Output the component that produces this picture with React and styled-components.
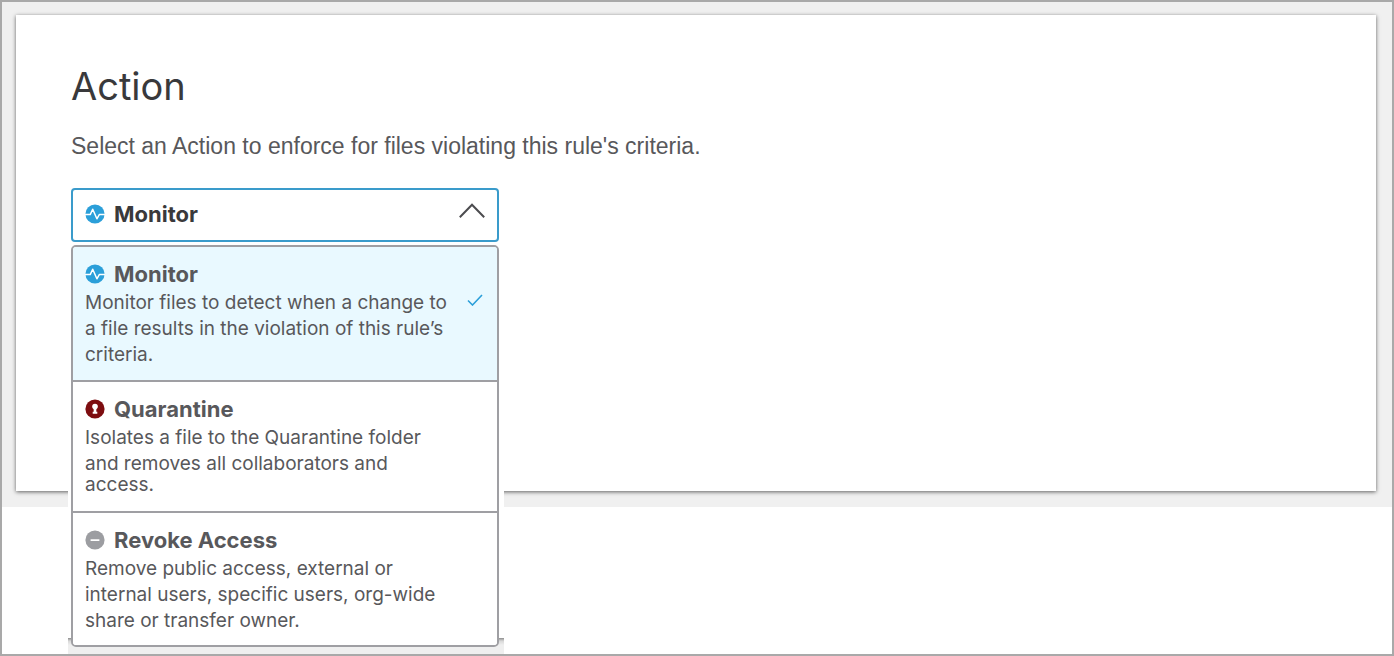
import { useState } from "react";
import styled, { createGlobalStyle } from "styled-components";

const options = [
  {
    id: "monitor",
    label: "Monitor",
    lines: [
      "Monitor files to detect when a change to",
      "a file results in the violation of this rule’s",
      "criteria.",
    ],
  },
  {
    id: "quarantine",
    label: "Quarantine",
    tight: true,
    lines: [
      "Isolates a file to the Quarantine folder",
      "and removes all collaborators and",
      "access.",
    ],
  },
  {
    id: "revoke",
    label: "Revoke Access",
    lines: [
      "Remove public access, external or",
      "internal users, specific users, org-wide",
      "share or transfer owner.",
    ],
  },
];

export default function App() {
  const [open, setOpen] = useState(true);
  const [selected, setSelected] = useState("monitor");
  const current = options.find((option) => option.id === selected);

  const choose = (id) => {
    setSelected(id);
    setOpen(false);
  };

  return (
    <Frame>
      <GlobalStyle />
      <Panel>
        <Card>
          <Title>Action</Title>
          <Intro id="action-label">
            Select an Action to enforce for files violating this rule's
            criteria.
          </Intro>
          <Dropdown>
            <Trigger
              type="button"
              aria-haspopup="listbox"
              aria-expanded={open}
              aria-describedby="action-label"
              onClick={() => setOpen(!open)}
            >
              <ActionIcon id={current.id} />
              <TriggerLabel>{current.label}</TriggerLabel>
              <Chevron viewBox="0 0 26 16" $open={open}>
                <path d="M.8 14.2 13 1.8l12.2 12.4" />
              </Chevron>
            </Trigger>
            {open && (
              <Popover>
                <Menu role="listbox" aria-labelledby="action-label">
                  {options.map((option) => (
                    <Option
                      key={option.id}
                      type="button"
                      role="option"
                      aria-selected={option.id === selected}
                      $selected={option.id === selected}
                      onClick={() => choose(option.id)}
                    >
                      <OptionHeading>
                        <ActionIcon id={option.id} />
                        {option.label}
                      </OptionHeading>
                      <OptionBody>
                        <OptionText $tight={option.tight}>
                          {option.lines.map((line) => (
                            <Line key={line}>{line} </Line>
                          ))}
                        </OptionText>
                        {option.id === selected && (
                          <Check viewBox="0 0 16 12">
                            <path d="M1 6.5 5.5 11 15 1" />
                          </Check>
                        )}
                      </OptionBody>
                    </Option>
                  ))}
                </Menu>
              </Popover>
            )}
          </Dropdown>
        </Card>
      </Panel>
    </Frame>
  );
}

function ActionIcon({ id }) {
  if (id === "quarantine") {
    return (
      <Icon viewBox="0 0 20 20" aria-hidden="true">
        <circle cx="10" cy="10" r="9.6" fill="#7d0d10" />
        <circle cx="10" cy="7.6" r="2.8" fill="#fff" />
        <path d="M8.7 8h2.6v4.8h1v1.9H7.7v-1.9h1z" fill="#fff" />
      </Icon>
    );
  }
  if (id === "revoke") {
    return (
      <Icon viewBox="0 0 20 20" aria-hidden="true">
        <circle cx="10" cy="10" r="9.6" fill="#9c9da1" />
        <path d="M5.6 10.2h8.8" stroke="#fff" strokeWidth="1.8" />
      </Icon>
    );
  }
  return (
    <Icon viewBox="0 0 20 20" aria-hidden="true">
      <circle cx="10" cy="10" r="9.6" fill="#2b9fd9" />
      <path
        d="M0 10.6h5.2l2.5-5.4 4.2 9.6 2.4-4.2H20"
        fill="none"
        stroke="#fff"
        strokeWidth="1.5"
        strokeLinejoin="round"
      />
    </Icon>
  );
}

const GlobalStyle = createGlobalStyle`
  * {
    box-sizing: border-box;
  }
  body {
    margin: 0;
    background: #fff;
    color: #58585b;
    font-family: Inter, "Liberation Sans", sans-serif;
  }
`;

const Frame = styled.main`
  min-height: 100vh;
  border: 2px solid #a9a9a9;
`;

const Panel = styled.div`
  padding: 13px 16px 16px 14px;
  background: #f0f0f0;
`;

const Card = styled.section`
  padding: 47px 55px 249px;
  background: #fff;
  box-shadow: 0 1px 4px rgba(0, 0, 0, 0.6);
`;

const Title = styled.h1`
  margin: 0;
  color: #39393b;
  font-size: 38px;
  font-weight: 400;
  line-height: 48px;
`;

const Intro = styled.p`
  margin: 21px 0 27px;
  font-family: "Liberation Sans", Arial, sans-serif;
  font-size: 23px;
  line-height: 30px;
`;

const Dropdown = styled.div`
  position: relative;
  max-width: 428px;
`;

const Trigger = styled.button`
  display: flex;
  align-items: center;
  gap: 9px;
  width: 100%;
  height: 54px;
  padding: 0 12px 2px;
  border: 2px solid #3a9bcb;
  border-radius: 4px;
  background: #fff;
  color: #39393b;
  font-family: inherit;
  font-size: 22px;
  font-weight: 700;
  text-align: left;
  cursor: pointer;
`;

const TriggerLabel = styled.span`
  flex: 1;
`;

const Icon = styled.svg`
  flex: none;
  width: 20px;
  height: 20px;
`;

const Chevron = styled.svg`
  width: 26px;
  height: 16px;
  margin-bottom: 6px;
  fill: none;
  stroke: #4c4c4f;
  stroke-width: 2;
  transform: ${({ $open }) => ($open ? "none" : "rotate(180deg)")};
`;

const Popover = styled.div`
  position: absolute;
  top: 100%;
  left: -3px;
  right: -5px;
  padding: 3px 5px 7px 3px;
  background: linear-gradient(#8d8d8d, #d8d8d8 3px, #efefef 7px) bottom / 100%
      16px no-repeat #fff;
`;

const Menu = styled.div`
  overflow: hidden;
  border: 2px solid #9f9fa3;
  border-radius: 5px;
  background: #fff;
`;

const Option = styled.button`
  display: block;
  width: 100%;
  padding: 12px;
  border: 0;
  background: ${({ $selected }) => ($selected ? "#e9f9ff" : "#fff")};
  color: inherit;
  font-family: inherit;
  text-align: left;
  cursor: pointer;

  & + & {
    border-top: 2px solid #9f9fa3;
  }

  &:last-child {
    padding-bottom: 11px;
  }
`;

const OptionHeading = styled.span`
  display: flex;
  align-items: center;
  gap: 9px;
  font-size: 22px;
  font-weight: 700;
  line-height: 30px;
`;

const OptionBody = styled.span`
  display: flex;
  align-items: flex-start;
  justify-content: space-between;
  margin-top: 1px;
`;

const Line = styled.span`
  display: block;
  white-space: nowrap;
`;

const OptionText = styled.span`
  display: block;
  padding-bottom: ${({ $tight }) => ($tight ? "6px" : "0")};
  font-size: 19px;
  line-height: 26px;

  ${Line}:last-child {
    line-height: ${({ $tight }) => ($tight ? "16px" : "26px")};
  }
`;

const Check = styled.svg`
  flex: none;
  width: 16px;
  height: 12px;
  margin: 4px 2px 0 0;
  fill: none;
  stroke: #2b9fd9;
  stroke-width: 1.6;
`;
